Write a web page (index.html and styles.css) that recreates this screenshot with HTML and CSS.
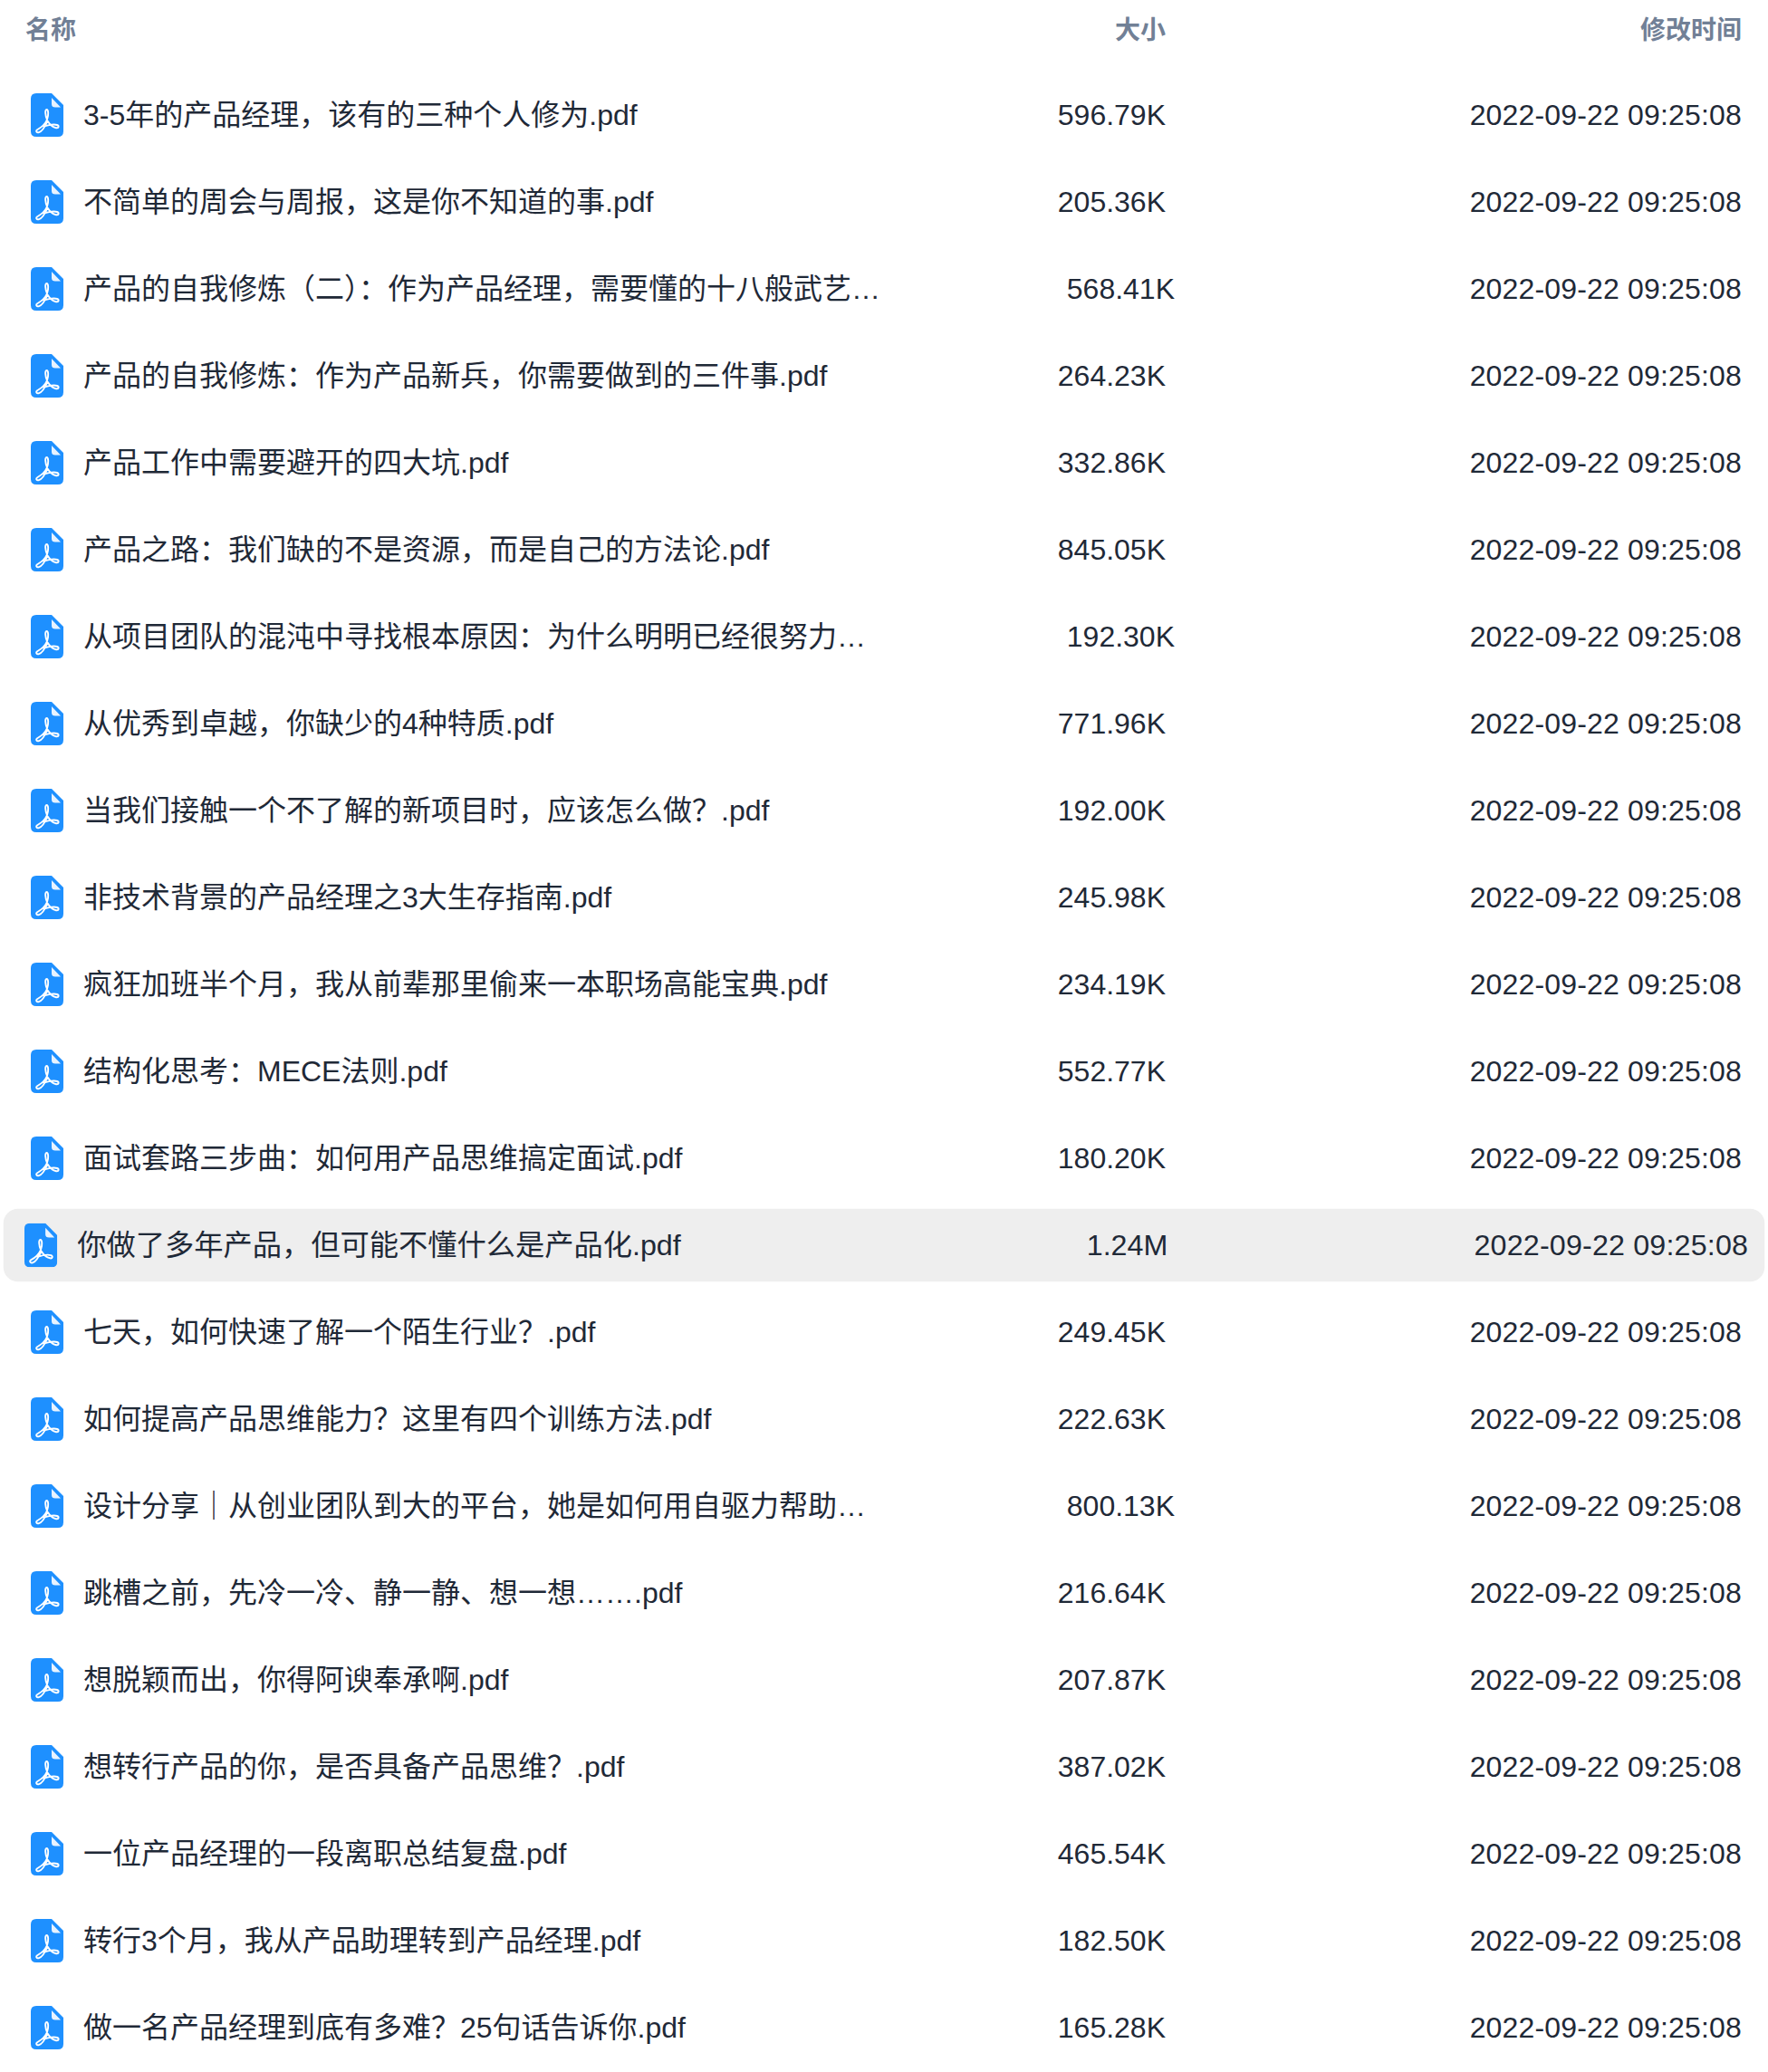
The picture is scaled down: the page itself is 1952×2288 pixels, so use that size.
FILE: index.html
```html
<!DOCTYPE html>
<html>
<head>
	<meta charset="utf-8"/>
	<title>文件列表</title>
	<link rel="stylesheet" href="styles.css">
</head>
<body>
	<svg class="defs" width="0" height="0">
		<symbol id="pdf" viewBox="0 0 36 48">
			<path fill="#1e90ff" d="M6 0H23L36 13V42Q36 48 30 48H6Q0 48 0 42V6Q0 0 6 0Z"/>
			<path fill="#e8f3ff" d="M23 5L33 15.500H27Q23 15.500 23 12Z"/>
			<path fill="none" stroke="#fff" stroke-width="1.900" stroke-linejoin="round" d="M17.500 18C15.500 18 15.800 24 18 29C15.500 35 11 38 7.500 40C5 41.500 6.500 44 9 43.200C12 42.200 15.500 37.500 18.500 30.500C21 34.500 24.500 37.500 28 38.200C31 38.800 31.500 36 29 35C26 34 21 34.500 13.500 37M18 29C19.800 24 19.500 18 17.500 18"/>
		</symbol>
	</svg>

	<div class="head">
		<span class="name">名称</span>
		<span class="size">大小</span>
		<span class="time">修改时间</span>
	</div>

	<ul class="list">
		<li class="row"><svg class="icon"><use href="#pdf"/></svg><span class="name">3-5年的产品经理，该有的三种个人修为.pdf</span><span class="size">596.79K</span><span class="time">2022-09-22 09:25:08</span></li>
		<li class="row"><svg class="icon"><use href="#pdf"/></svg><span class="name">不简单的周会与周报，这是你不知道的事.pdf</span><span class="size">205.36K</span><span class="time">2022-09-22 09:25:08</span></li>
		<li class="row long"><svg class="icon"><use href="#pdf"/></svg><span class="name">产品的自我修炼（二）：作为产品经理，需要懂的十八般武艺.pdf</span><span class="size">568.41K</span><span class="time">2022-09-22 09:25:08</span></li>
		<li class="row"><svg class="icon"><use href="#pdf"/></svg><span class="name">产品的自我修炼：作为产品新兵，你需要做到的三件事.pdf</span><span class="size">264.23K</span><span class="time">2022-09-22 09:25:08</span></li>
		<li class="row"><svg class="icon"><use href="#pdf"/></svg><span class="name">产品工作中需要避开的四大坑.pdf</span><span class="size">332.86K</span><span class="time">2022-09-22 09:25:08</span></li>
		<li class="row"><svg class="icon"><use href="#pdf"/></svg><span class="name">产品之路：我们缺的不是资源，而是自己的方法论.pdf</span><span class="size">845.05K</span><span class="time">2022-09-22 09:25:08</span></li>
		<li class="row long"><svg class="icon"><use href="#pdf"/></svg><span class="name">从项目团队的混沌中寻找根本原因：为什么明明已经很努力了.pdf</span><span class="size">192.30K</span><span class="time">2022-09-22 09:25:08</span></li>
		<li class="row"><svg class="icon"><use href="#pdf"/></svg><span class="name">从优秀到卓越，你缺少的4种特质.pdf</span><span class="size">771.96K</span><span class="time">2022-09-22 09:25:08</span></li>
		<li class="row"><svg class="icon"><use href="#pdf"/></svg><span class="name">当我们接触一个不了解的新项目时，应该怎么做？.pdf</span><span class="size">192.00K</span><span class="time">2022-09-22 09:25:08</span></li>
		<li class="row"><svg class="icon"><use href="#pdf"/></svg><span class="name">非技术背景的产品经理之3大生存指南.pdf</span><span class="size">245.98K</span><span class="time">2022-09-22 09:25:08</span></li>
		<li class="row"><svg class="icon"><use href="#pdf"/></svg><span class="name">疯狂加班半个月，我从前辈那里偷来一本职场高能宝典.pdf</span><span class="size">234.19K</span><span class="time">2022-09-22 09:25:08</span></li>
		<li class="row"><svg class="icon"><use href="#pdf"/></svg><span class="name">结构化思考：MECE法则.pdf</span><span class="size">552.77K</span><span class="time">2022-09-22 09:25:08</span></li>
		<li class="row"><svg class="icon"><use href="#pdf"/></svg><span class="name">面试套路三步曲：如何用产品思维搞定面试.pdf</span><span class="size">180.20K</span><span class="time">2022-09-22 09:25:08</span></li>
		<li class="row active"><svg class="icon"><use href="#pdf"/></svg><span class="name">你做了多年产品，但可能不懂什么是产品化.pdf</span><span class="size">1.24M</span><span class="time">2022-09-22 09:25:08</span></li>
		<li class="row"><svg class="icon"><use href="#pdf"/></svg><span class="name">七天，如何快速了解一个陌生行业？.pdf</span><span class="size">249.45K</span><span class="time">2022-09-22 09:25:08</span></li>
		<li class="row"><svg class="icon"><use href="#pdf"/></svg><span class="name">如何提高产品思维能力？这里有四个训练方法.pdf</span><span class="size">222.63K</span><span class="time">2022-09-22 09:25:08</span></li>
		<li class="row long"><svg class="icon"><use href="#pdf"/></svg><span class="name">设计分享｜从创业团队到大的平台，她是如何用自驱力帮助团队成长.pdf</span><span class="size">800.13K</span><span class="time">2022-09-22 09:25:08</span></li>
		<li class="row"><svg class="icon"><use href="#pdf"/></svg><span class="name">跳槽之前，先冷一冷、静一静、想一想…….pdf</span><span class="size">216.64K</span><span class="time">2022-09-22 09:25:08</span></li>
		<li class="row"><svg class="icon"><use href="#pdf"/></svg><span class="name">想脱颖而出，你得阿谀奉承啊.pdf</span><span class="size">207.87K</span><span class="time">2022-09-22 09:25:08</span></li>
		<li class="row"><svg class="icon"><use href="#pdf"/></svg><span class="name">想转行产品的你，是否具备产品思维？.pdf</span><span class="size">387.02K</span><span class="time">2022-09-22 09:25:08</span></li>
		<li class="row"><svg class="icon"><use href="#pdf"/></svg><span class="name">一位产品经理的一段离职总结复盘.pdf</span><span class="size">465.54K</span><span class="time">2022-09-22 09:25:08</span></li>
		<li class="row"><svg class="icon"><use href="#pdf"/></svg><span class="name">转行3个月，我从产品助理转到产品经理.pdf</span><span class="size">182.50K</span><span class="time">2022-09-22 09:25:08</span></li>
		<li class="row"><svg class="icon"><use href="#pdf"/></svg><span class="name">做一名产品经理到底有多难？25句话告诉你.pdf</span><span class="size">165.28K</span><span class="time">2022-09-22 09:25:08</span></li>
	</ul>
</body>
</html>
```

FILE: styles.css
```css
*{margin: 0;padding: 0;box-sizing: border-box;}
ul{list-style-type: none;}
body{
	background: #fff;
	color: #1f2937;
	font-family: "Liberation Sans", "Noto Sans CJK SC", sans-serif;
	font-size: 32px;
	line-height: 48px;
}
.defs{
	display: block;
	height: 0;
}
.head{
	display: flex;
	align-items: center;
	height: 67px;
	padding: 0 29px 0 28px;
	font-size: 28px;
	font-weight: 700;
	color: #718096;
}
.head .name{
	flex: none;
	width: 952px;
}
.head .size{
	flex: none;
	width: 307px;
	text-align: right;
}
.head .time{
	flex: 1;
	text-align: right;
}
.list{
	padding-top: 20px;
}
.row{
	display: flex;
	align-items: center;
	height: 80px;
	margin: 0 11px 16px;
	padding: 0 18px 0 23px;
	border-radius: 16px;
}
.icon{
	flex: none;
	width: 36px;
	height: 48px;
	margin-right: 22px;
}
.row .name{
	flex: none;
	width: 888px;
	white-space: nowrap;
	overflow: hidden;
	text-overflow: ellipsis;
}
.row .size{
	flex: none;
	width: 307px;
	text-align: right;
}
.row .time{
	flex: 1;
	text-align: right;
	letter-spacing: 0.17px;
}
.long .size{
	transform: translateX(10px);
}
.active{
	background: #eee;
	transform: scale(1.0075);
}
```
